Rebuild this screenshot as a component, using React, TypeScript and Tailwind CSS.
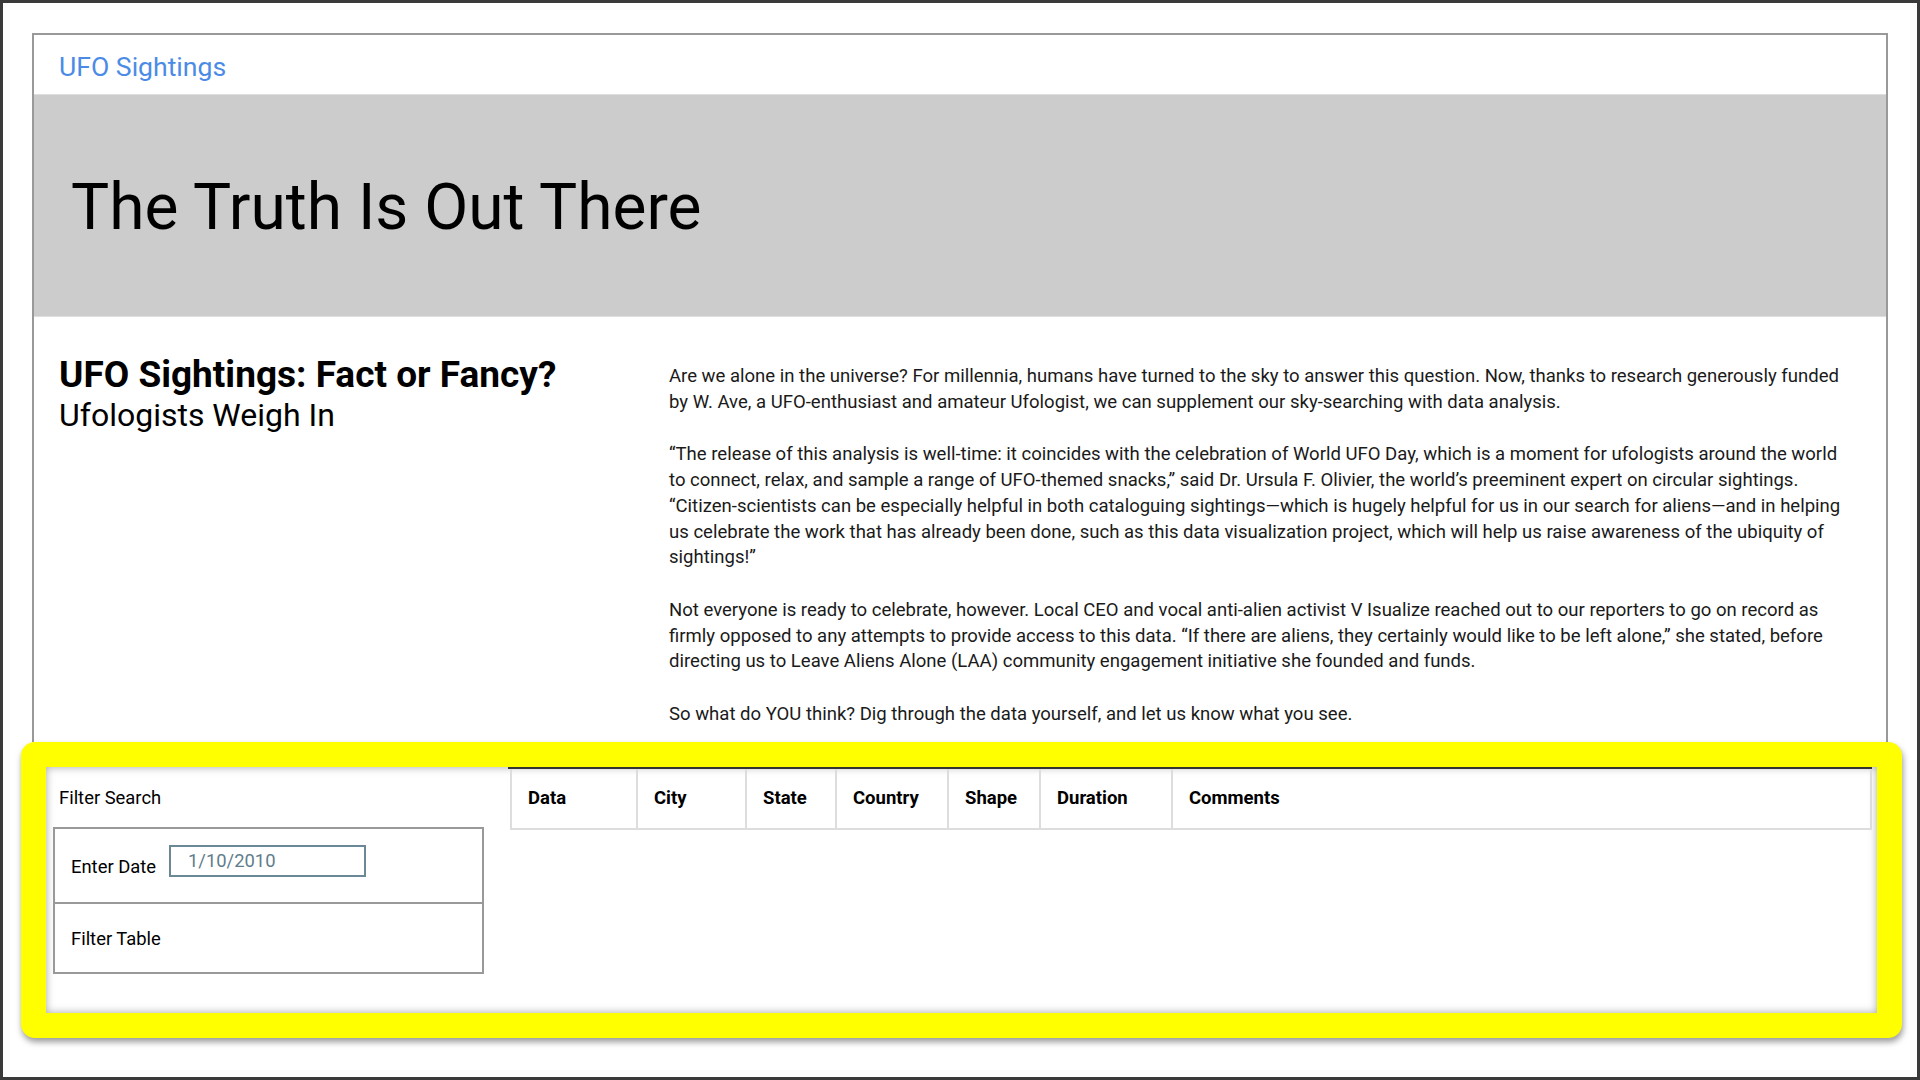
// UFO Sightings landing page with highlighted filter / table area

import React from 'react';

const columns = [
  { label: 'Data', width: 'w-[126px]' },
  { label: 'City', width: 'w-[109px]' },
  { label: 'State', width: 'w-[90px]' },
  { label: 'Country', width: 'w-[112px]' },
  { label: 'Shape', width: 'w-[92px]' },
  { label: 'Duration', width: 'w-[132px]' },
  { label: 'Comments', width: 'w-[698px]' },
];

export default function App() {
  return (
    <div className="w-[1920px] h-[1080px] overflow-hidden bg-white border-[3px] border-[#3a3a3a] font-['Roboto','Liberation_Sans',sans-serif] text-[#1a1a1a]">
      {/* Page card */}
      <div className="mt-[30px] ml-[29px] w-[1856px] border-2 border-b-0 border-[#999]">
        {/* Nav */}
        <div className="h-[59px] pl-[25px] pt-[17px]">
          <a className="text-[26.6px] leading-[30px] text-[#4b8be6]">UFO Sightings</a>
        </div>

        {/* Hero */}
        <div className="h-[223px] bg-[#cccccc] border-y border-[#dedede] pl-[37px] pt-[81px]">
          <h1 className="text-[64px] leading-[64px] text-black">The Truth Is Out There</h1>
        </div>

        {/* Article */}
        <div className="h-[425px] flex pl-[25px]">
          <div className="w-[610px] pt-[38px]">
            <h2 className="text-[37px] leading-[40px] font-bold text-black">UFO Sightings: Fact or Fancy?</h2>
            <h3 className="mt-[3px] text-[32px] leading-[34px] text-black">Ufologists Weigh In</h3>
          </div>
          <div className="w-[1188px] pt-[47px] text-[18.55px] leading-[25.7px]">
            <p className="mb-[27px]">
              Are we alone in the universe? For millennia, humans have turned to the sky to answer this question. Now, thanks to research generously funded by W. Ave, a UFO-enthusiast and amateur Ufologist, we can supplement our sky-searching with data analysis.
            </p>
            <p className="mb-[27px]">
              “The release of this analysis is well-time: it coincides with the celebration of World UFO Day, which is a moment for ufologists around the world to connect, relax, and sample a range of UFO-themed snacks,” said Dr. Ursula F. Olivier, the world’s preeminent expert on circular sightings. “Citizen-scientists can be especially helpful in both cataloguing sightings—which is hugely helpful for us in our search for aliens—and in helping us celebrate the work that has already been done, such as this data visualization project, which will help us raise awareness of the ubiquity of sightings!”
            </p>
            <p className="mb-[27px]">
              Not everyone is ready to celebrate, however. Local CEO and vocal anti-alien activist V Isualize reached out to our reporters to go on record as firmly opposed to any attempts to provide access to this data. “If there are aliens, they certainly would like to be left alone,” she stated, before directing us to Leave Aliens Alone (LAA) community engagement initiative she founded and funds.
            </p>
            <p>So what do YOU think? Dig through the data yourself, and let us know what you see.</p>
          </div>
        </div>
      </div>

      {/* Highlighted filter section */}
      <div className="ml-[18px] w-[1881px] h-[296px] rounded-[14px] bg-[#ffff00] p-[25px] shadow-[1px_4px_6px_rgba(0,0,0,0.4)]">
        <div className="h-full flex bg-white shadow-[inset_0_0_8px_rgba(0,0,0,0.35)] text-[18.4px] leading-[25.7px]">
          {/* Filter panel */}
          <div className="w-[462px] pl-[7px] pt-[18px]">
            <div className="pl-[6px] text-black">Filter Search</div>
            <div className="mt-[16px] w-[431px] border-2 border-[#999]">
              <div className="h-[75px] flex items-start pl-[16px] pt-[16px] border-b-2 border-[#999]">
                <label className="mt-[9px] text-black">Enter Date</label>
                <input
                  className="ml-[13px] w-[197px] h-[32px] border-2 border-[#6b8896] pl-[17px] text-[18.4px] text-[#5f7d8c] outline-none"
                  placeholder="1/10/2010"
                  defaultValue="1/10/2010"
                />
              </div>
              <div className="h-[68px] pl-[16px] pt-[22px] text-black">Filter Table</div>
            </div>
          </div>

          {/* Results table */}
          <div className="w-[1364px] h-[63px] border-t-2 border-[#333]">
            <div className="ml-[2px] flex border-b-2 border-r-2 border-[#dddddd]">
              {columns.map((col) => (
                <div
                  key={col.label}
                  className={`${col.width} h-[59px] border-l-2 border-[#dddddd] pl-[16px] pt-[17px] font-bold text-[18.5px] text-black`}
                >
                  {col.label}
                </div>
              ))}
            </div>
          </div>
        </div>
      </div>
    </div>
  );
}
